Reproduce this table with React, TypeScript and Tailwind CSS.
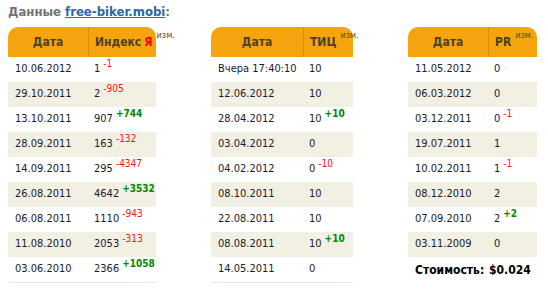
import React from 'react';

type Row = { date: string; value: string; delta?: string };

const yandexRows: Row[] = [
  { date: '10.06.2012', value: '1', delta: '-1' },
  { date: '29.10.2011', value: '2', delta: '-905' },
  { date: '13.10.2011', value: '907', delta: '+744' },
  { date: '28.09.2011', value: '163', delta: '-132' },
  { date: '14.09.2011', value: '295', delta: '-4347' },
  { date: '26.08.2011', value: '4642', delta: '+3532' },
  { date: '06.08.2011', value: '1110', delta: '-943' },
  { date: '11.08.2010', value: '2053', delta: '-313' },
  { date: '03.06.2010', value: '2366', delta: '+1058' },
];

const ticRows: Row[] = [
  { date: 'Вчера 17:40:10', value: '10' },
  { date: '12.06.2012', value: '10' },
  { date: '28.04.2012', value: '10', delta: '+10' },
  { date: '03.04.2012', value: '0' },
  { date: '04.02.2012', value: '0', delta: '-10' },
  { date: '08.10.2011', value: '10' },
  { date: '22.08.2011', value: '10' },
  { date: '08.08.2011', value: '10', delta: '+10' },
  { date: '14.05.2011', value: '0' },
];

const prRows: Row[] = [
  { date: '11.05.2012', value: '0' },
  { date: '06.03.2012', value: '0' },
  { date: '03.12.2011', value: '0', delta: '-1' },
  { date: '19.07.2011', value: '1' },
  { date: '10.02.2011', value: '1', delta: '-1' },
  { date: '08.12.2010', value: '2' },
  { date: '07.09.2010', value: '2', delta: '+2' },
  { date: '03.11.2009', value: '0' },
];

const Delta = ({ delta }: { delta?: string }) => {
  if (!delta) return null;
  const up = delta.startsWith('+');
  return (
    <span
      className={`relative -top-[5px] ml-[3px] text-[10px] ${up ? 'font-bold text-[#008a00]' : 'text-[#ff1010]'}`}
    >
      {delta}
    </span>
  );
};

function StatTable({
  rows,
  title,
  dateW,
  valueW,
  footer,
}: {
  rows: Row[];
  title: React.ReactNode;
  dateW: string;
  valueW: string;
  footer?: React.ReactNode;
}) {
  return (
    <div className="flex flex-col">
      <div className="flex h-[30px] rounded-t-[10px] bg-[#f5a30f] text-[12px] font-bold text-[#4a4128]">
        <div className={`${dateW} flex items-center justify-center`}>Дата</div>
        <div className={`${valueW} flex items-center border-l border-[#d98d08] pl-[6px] whitespace-nowrap`}>
          {title}
          <span className="relative -top-[6px] ml-[4px] text-[9px] font-normal text-[#5a4c30]">изм.</span>
        </div>
      </div>
      {rows.map((r, i) => (
        <div
          key={r.date}
          className={`flex h-[25px] items-center text-[11px] text-[#1c1a30] ${i % 2 === 1 ? 'bg-[#f2efe3]' : ''}`}
        >
          <div className={`${dateW} pl-[7px] whitespace-nowrap`}>{r.date}</div>
          <div className={`${valueW} pl-[6px] whitespace-nowrap`}>
            {r.value}
            <Delta delta={r.delta} />
          </div>
        </div>
      ))}
      {footer ?? <div className="h-px bg-[#e9e6da]" />}
    </div>
  );
}

export default function App() {
  return (
    <div
      className="bg-white pl-2 pt-[3px]"
      style={{ fontFamily: '"DejaVu Sans Condensed", "DejaVu Sans", sans-serif' }}
    >
      <div className="text-[13px] font-bold leading-[18px] text-[#737373]">
        Данные{' '}
        <a href="#" className="text-[#2d68a6] underline">
          free-biker.mobi
        </a>
        :
      </div>
      <div className="mt-[6px] flex gap-[55px]">
        <StatTable
          rows={yandexRows}
          dateW="w-[80px]"
          valueW="w-[68px]"
          title={
            <>
              Индекс <span className="ml-[3px] text-[#ff0000]">Я</span>
            </>
          }
        />
        <StatTable rows={ticRows} dateW="w-[92px]" valueW="w-[50px]" title="ТИЦ" />
        <StatTable
          rows={prRows}
          dateW="w-[80px]"
          valueW="w-[49px]"
          title="PR"
          footer={
            <div className="flex h-[25px] items-center text-[12px] font-bold text-black">
              <div className="w-[80px] pl-[7px]">Стоимость:</div>
              <div className="w-[49px] pl-[1px]">$0.024</div>
            </div>
          }
        />
      </div>
    </div>
  );
}
